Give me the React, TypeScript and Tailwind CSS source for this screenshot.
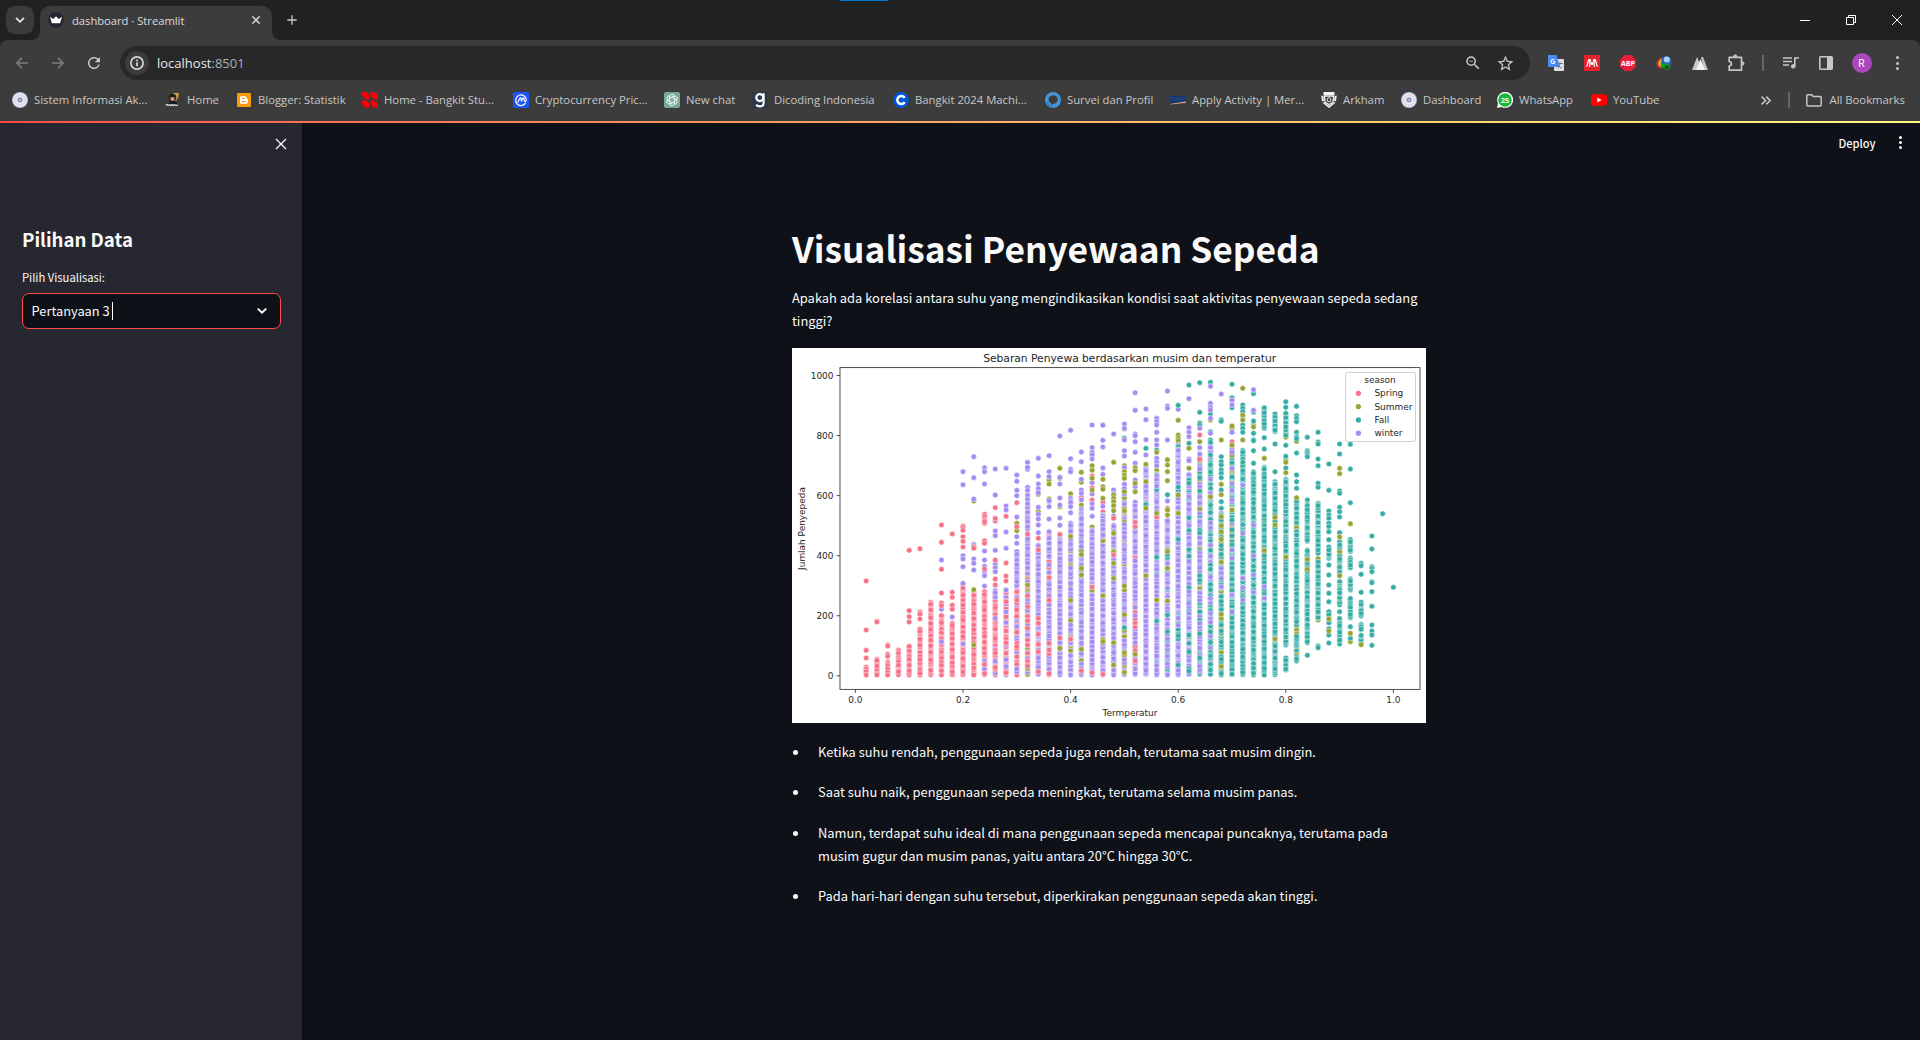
import React from 'react';
import { MdAdd, MdRefresh, MdStarBorder, MdZoomOut } from 'react-icons/md';

const CHROME = "font-['Open_Sans','Noto_Sans',sans-serif]";
const SOURCE = "font-['Noto_Sans_CJK_SC','Noto_Sans',sans-serif]";

/* ---------- Scatter data ---------- */

const COLORS: Record<string, string> = {
  P: '#f77189',
  S: '#97a431',
  F: '#36ada4',
  W: '#a48cf4',
};

// One entry per temperature step of 0.02. Each part is "<season mix> <positions>",
// where a position is a single height or a from-to range that is densely filled.
const COLUMNS: Record<number, string> = {
  1: 'P 708,855,916,939,967,972,980,990',
  2: 'P 829,831,943-990',
  3: 'P 900,903,928,934,951,956,962,972,982,990',
  4: 'P 915,920,926,937,944,950,960-990',
  5: 'P 616,797,815,831,904-990',
  6: 'P 611,800,803,808,822,850-990',
  7: 'W 784|P 771-990',
  8: 'W 645,793|P 540,592,673,744,774,782,810-990|W 890',
  9: 'W 816|P 567,742,757,781,793,835-990',
  10: 'P 543,547,556,575,589,606,720-990|W 380,419,632,642,665,715,897',
  11: 'S 468,598|W 335,398,462,600,642,655,675,765,880|P 605,610,740-990|S 734,900',
  12: 'P 508,535,515,525,530,587,595|PPPPPPW 740-990|W 368,380,417,618,645,664,680,692,723|P 672',
  13: 'W 450,558,572,616,650,658,668,680|W 372|P 488,528,520,645,702,720|PPPPW 735-990|W 743,820',
  14: 'W 370,483,495,561,610|P 514,654,693,708,760|WPP 735-990|P 770,893,925,983|W 735,801',
  15: 'S 535,557|P 473,545|W 516,390,409,436,452,575,595,618-740|WPP 740-990|P 740,765,895,905,935',
  16: 'S 458,685,725|P 552|W 352,373,367,427,436,450,464,475-553,570-690|WWPS 700-990|P 567,752,785,827,850,885,948,963|S 720',
  17: 'S 448,500|W 340,393,417,431,443,487,508,522,540,563,600-990|P 580,615,820,835,868,898,920,980',
  18: 'S 405,417,462|W 332,380,395,470,485,522,467|WWWWP 560-990|P 895,915,986',
  19: 'S 400,485,645,705|W 273,397,417,459,480,519,541,575-990|S 370,910|P 568,879',
  20: 'S 446|W 256,341,373,380,460,467,473,485,503|WWWWWWWWS 535-990|P 883',
  21: 'P 457|S 412,480,555|W 321,350,403,435,445,465,493|WWWWWWWWWS 500-990|S 382,670,690,913|P 977',
  22: 'P 393,428,465|W 240,308,322,330,342,413,447,476,490,514|S 362,376,400,435,546|W 555-990|S 730,736|P 726,983',
  23: 'P 472,500,548|F 510|W 239,241,286,306,369,388,484,518|WWWWWWWWS 512-990|S 403,425,433,460,890|P 988',
  24: 'F 950|W 267,435,445,513,549,540-990|S 352,450,460,470,482,497,565,618,622,655,700,893,960|P 520,630',
  25: 'S 252,362,650|F 280,465|W 237,250,285,317,333,368,418|WWWWS 430-990|S 380,390,400,440,498|F 848',
  26: 'W 143,196,267,272,290,322,355,405,425|WWWWWWP 470-990|S 368,377,415,440,928|W 482,496',
  27: 'W 192,224,284,330,370-990|F 310,478|S 358,410,490,692',
  28: 'S 376|F 315,400|W 220,230,240,262,285,300,340,352,362|S 322,388|WWWWWWF 390-990|P 516|S 505,765',
  29: 'W 138,183,190,285,468|P 490|WWWWWWF 525-990|S 344,360,380,407,495,510,615,620,670,768|F 449,810,860',
  30: 'W 193|F 181|S 226,270,280,288|WWWWWWWF 300-990|S 450,505|F 960',
  31: 'F 120,295|W 161,248,262,275,342,347,388,430|S 310,370|WWWF 390-990|F 405,415,870,895,920|W 700,740',
  32: 'F 113,202,234,240|S 352|WWWFS 330-850|WF 800-990|W 250,308,327,365,372|P 270,343|S 290',
  33: 'F 112,207,260|S 225|FFW 285-990|W 124,175,187,195,220,265|S 455|W 600,760,805,832',
  34: 'F 224,229,335,350,360,375,385,398,435,470,490|W 147,505|S 449|FFFFS 510-990|FW 680-730|W 670,700,725|S 285,418,515,560,583',
  35: 'F 118,158,188|S 250|P 290|FFFWS 300-700|FFFF 600-990|W 166,180,262,322,615,640,750,800|S 243,495',
  36: 'F 180,190,200,215,240,250,262|FFFFS 315-990|F 315-990|S 130,210,225,285|W 420,565,700,728,765',
  37: 'S 240,246|F 146,202,228,265,284,287,317,355,380-990|W 134,196,540,632,690,742',
  38: 'F 188-250,278,312,365-990|S 340,617|W 725,760',
  39: 'F 207-260,297,380,410-990|S 517,540,882',
  40: 'S 277,345|F 170,187,205-272,301,334,369,403-900,937-975|S 352,383,636',
  41: 'S 289|F 184,212,220,230,262,275,281,324,390,410,430|FFFFFFFFS 465-948|S 458',
  42: 'F 277,317,322,328,335,465,478-590|FFFFFFFS 615-895|F 931',
  43: 'F 262,291,297,342,362,415,427,475-625|FFFFFS 640-825|F 650-820,903,908',
  44: 'F 357,436,498,510,520,535,545,560,584,605-640,660,690,720,745,770,800-835,851,870,894|S 822,858',
  45: 'F 297,327,438,445,487,500,516,563,590-690,710-780,800,820-897|S 370,386,576,620,692',
  46: 'S 890|F 298,372,473,582-620,638-668,700-735,760-818,845,880|S 536,865',
  47: 'F 655,662,688,742,772,780,790-815,838-855,870-895|S 899',
  48: 'F 573,612,665,670,680,710,713,740,784,840,858,870,901',
  49: 'F 506',
  50: 'F 727',
};

type Dot = { x: number; y: number; c: string };

function buildDots(): Dot[] {
  let seed = 20240;
  const rnd = () => {
    seed = (seed * 1664525 + 1013904223) % 4294967296;
    return seed / 4294967296;
  };
  const dots: Dot[] = [];
  Object.entries(COLUMNS).forEach(([k, spec]) => {
    const x = 63.4 + 10.76 * Number(k);
    spec.split('|').forEach((part) => {
      const [mix, list] = part.split(' ');
      list.split(',').forEach((item) => {
        const [a, b] = item.split('-').map(Number);
        if (b === undefined) {
          dots.push({ x, y: a / 3 - 3, c: COLORS[mix[0]] });
          return;
        }
        const n = Math.max(3, Math.round((b - a) / 4.2));
        const fill: Dot[] = [];
        for (let i = 0; i <= n; i++) {
          const u = Math.min(b, Math.max(a, a + ((b - a) * i) / n + (rnd() - 0.5) * 4));
          fill.push({ x, y: u / 3 - 3, c: COLORS[mix[Math.floor(rnd() * mix.length)]] });
        }
        for (let i = fill.length - 1; i > 0; i--) {
          const j = Math.floor(rnd() * (i + 1));
          [fill[i], fill[j]] = [fill[j], fill[i]];
        }
        dots.push(...fill);
      });
    });
  });
  return dots;
}

const DOTS = buildDots();

function Scatter() {
  return (
    <svg
      viewBox="0 0 634 375"
      className="block h-[375px] w-[634px] bg-white font-['DejaVu_Sans',sans-serif]"
      fill="#262626"
    >
      <text x="337.7" y="14.3" fontSize="10.75" textAnchor="middle" textLength="293">
        Sebaran Penyewa berdasarkan musim dan temperatur
      </text>
      {DOTS.map((d, i) => (
        <circle key={i} cx={d.x} cy={d.y} r="2.75" fill={d.c} stroke="#fff" strokeWidth="0.5" />
      ))}
      <rect x="48" y="19.6" width="580" height="321.8" fill="none" stroke="#3c3c3c" strokeWidth="0.9" />
      {[0, 200, 400, 600, 800, 1000].map((v) => (
        <g key={v}>
          <path d={`M44.6 ${327.8 - v * 0.3003}H48`} stroke="#3c3c3c" strokeWidth="0.9" />
          <text x="41.5" y={331.1 - v * 0.3003} fontSize="8.95" textAnchor="end">
            {v}
          </text>
        </g>
      ))}
      {['0.0', '0.2', '0.4', '0.6', '0.8', '1.0'].map((v, i) => (
        <g key={v}>
          <path d={`M${63.4 + i * 107.6} 341.4v3.4`} stroke="#3c3c3c" strokeWidth="0.9" />
          <text x={63.4 + i * 107.6} y="355.4" fontSize="8.95" textAnchor="middle">
            {v}
          </text>
        </g>
      ))}
      <text x="338" y="367.5" fontSize="8.95" textAnchor="middle">
        Termperatur
      </text>
      <text transform="translate(13 180.500) rotate(-90)" fontSize="8.95" textAnchor="middle">
        Jumlah Penyepeda
      </text>
      <rect x="553.5" y="24.5" width="70" height="69" rx="1.8" fill="#fff" fillOpacity="0.8" stroke="#ccc" strokeWidth="0.9" />
      <text x="588" y="35.1" fontSize="8.95" textAnchor="middle">
        season
      </text>
      {(
        [
          ['Spring', 'P'],
          ['Summer', 'S'],
          ['Fall', 'F'],
          ['winter', 'W'],
        ] as const
      ).map(([name, key], i) => (
        <g key={name}>
          <circle cx="566.4" cy={45.3 + i * 13.3} r="2.6" fill={COLORS[key]} />
          <text x="582.4" y={48.4 + i * 13.3} fontSize="8.95">
            {name}
          </text>
        </g>
      ))}
    </svg>
  );
}

/* ---------- Favicons ---------- */

function Ico({ children }: { children: React.ReactNode }) {
  return (
    <svg viewBox="0 0 16 16" className="block size-4 shrink-0" fill="none">
      {children}
    </svg>
  );
}

const Campus = () => (
  <Ico>
    <circle cx="8" cy="8" r="8" fill="#a9c3ea" />
    <circle cx="8" cy="8" r="6.9" fill="#e9edf7" />
    <circle cx="8" cy="8" r="5" stroke="#efc2bb" strokeWidth="1.6" strokeDasharray="1.3 1.1" />
    <circle cx="8" cy="8" r="3.1" fill="#cdd6ee" />
    <circle cx="8" cy="7.8" r="1.9" stroke="#5a6fb8" strokeWidth="0.9" />
    <path d="M7 7.600l2-.6-.4 2z" fill="#e79a5e" />
  </Ico>
);
const Avatar = () => (
  <Ico>
    <path d="M8 1h6l-1 5-2 3H7z" fill="#c9a24a" />
    <circle cx="7.5" cy="5.5" r="3.8" fill="#241c18" />
    <path d="M5.5 5.2h4v2.6l-2 1.4-2-1.4z" fill="#d9a184" />
    <path d="M4 10l3.5-1 4 1 .8 3H3z" fill="#171717" />
    <path d="M.5 13.200l1.800-.8.8 1 1.600-.9.9 1 1.700-.9.9.9 1.700-.8 1 .8 2-.6" stroke="#ddd" strokeWidth="1.200" />
  </Ico>
);
const Blogger = () => (
  <Ico>
    <rect x="1" y="1" width="14" height="14" rx="1" fill="#fb9a0b" />
    <path
      d="M6 4h2.4c1.4 0 2.3.9 2.3 2.2 0 .6.2.8.7.8.4 0 .6.2.6.6v1.7C12 11 10.9 12 9.4 12H6c-1.3 0-2-.8-2-2V6c0-1.2.8-2 2-2z"
      fill="#fff"
    />
    <path d="M6.3 6.4h1.9M6.3 9.6h3.3" stroke="#fb9a0b" strokeWidth="1.2" strokeLinecap="round" />
  </Ico>
);
const Bangkit = () => (
  <Ico>
    <g fill="#fb0007">
      <path d="M0 0h2.500C5.500 0 7.500 2.500 7.500 5v2.500H6C2.500 7.500 0 4.500 0 2z" />
      <path d="M8.500 0H11c3 0 5 2.500 5 5v2.500h-1.500c-3.500 0-6-3-6-5.500z" />
      <path d="M0 8.500h2.500c3 0 5 2.500 5 5V16H6c-3.500 0-6-3-6-5.500z" />
      <path d="M8.500 8.500H11c3 0 5 2.500 5 5V16h-1.500c-3.500 0-6-3-6-5.500z" />
    </g>
  </Ico>
);
const CoinMarket = () => (
  <Ico>
    <rect width="16" height="16" rx="2" fill="#1c53fb" />
    <path
      d="M12.4 11.2A5.3 5.3 0 1 1 13.3 8c0 1.9-2.2 2-2.2.4V6.8c0-1.2-1.1-1.2-1.5-.3L8.2 9.3V6.7c0-1-1-1.1-1.5-.2L5 9.900"
      stroke="#fff"
      strokeWidth="1.2"
      strokeLinecap="round"
    />
  </Ico>
);
const ChatGpt = () => (
  <Ico>
    <rect width="16" height="16" rx="2" fill="#75a99b" />
    <g stroke="#fff" strokeWidth="0.85">
      {[0, 60, 120, 180, 240, 300].map((a) => (
        <path key={a} transform={`rotate(${a} 8 8)`} d="M5.8 8.2V4.8a2.5 2.5 0 0 1 4.5-1.4M7 5.6l3.3-2" />
      ))}
    </g>
  </Ico>
);
const Dicoding = () => (
  <Ico>
    <rect width="15.5" height="16" fill="#2b3a4b" />
    <circle cx="7.800" cy="5.600" r="3.500" stroke="#fff" strokeWidth="2.200" />
    <path d="M11.600 1.200v9.500c0 2.600-1.500 3.700-3.700 3.700-1.700 0-2.900-.6-3.800-1.600" stroke="#fff" strokeWidth="2.100" />
  </Ico>
);
const Coursera = () => (
  <Ico>
    <circle cx="8" cy="8" r="8" fill="#0056d2" />
    <path d="M11.7 10.1A4 4 0 1 1 11.7 5.900" stroke="#fff" strokeWidth="2.5" />
  </Ico>
);
const Survey = () => (
  <Ico>
    <circle cx="8" cy="8" r="8" fill="#4795d6" />
    <path
      d="M3.5 7.5c0-2.5 2-4.2 4.7-4.2s4.6 1.700 4.600 4.200-2 4.200-4.400 4.200l-2.200 1.500.2-1.900c-1.800-.6-2.900-2-2.900-3.800z"
      fill="#3c3c3c"
    />
    <path d="M1.5 10.5C3 14 6 15.7 9.5 15.2 6.5 15 4 13.5 3 11z" fill="#1f62a6" />
  </Ico>
);
const Mercu = () => (
  <Ico>
    <path d="M0 4h16v6.5L0 11z" fill="#17376f" />
    <path d="M1 5.8h3M5.5 5.8h2M9 5.8h2.5M13 5.8h2M1 7.8h2M4.5 7.8h3M9 7.8h4" stroke="#2c5590" strokeWidth="0.8" />
    <path d="M0 12l16-2.5v1.2L0 12.6z" fill="#f2b48c" />
  </Ico>
);
const ArkhamIcon = () => (
  <Ico>
    <path d="M2.5 0h11v3h-11zM.3 3.6l1.9.4.8 4.6L1 9.5zM15.7 3.6l-1.9.4-.8 4.6 2 .9z" fill="#f5f5f5" />
    <path d="M3.3 4h9.4l-.8 6.2L8 12.5l-3.900-2.300z" stroke="#f5f5f5" strokeWidth="1.3" />
    <path d="M1.5 10.8L8 16l6.5-5.2-1.5-.6L8 13.8l-5-3.6z" fill="#f5f5f5" />
    <path d="M8 5.5l2 1.5-.7 2.5H6.7L6 7z" stroke="#f5f5f5" strokeWidth="0.9" />
  </Ico>
);
const WhatsApp = () => (
  <Ico>
    <path d="M0 16l1-4.5A8 8 0 1 1 4.5 15z" fill="#fff" />
    <circle cx="8" cy="8" r="6.8" fill="#16b842" />
    <text x="8" y="10.7" fontSize="7.5" fontWeight="700" textAnchor="middle" fill="#fff">
      25
    </text>
  </Ico>
);
const YouTube = () => (
  <Ico>
    <rect x="0" y="2.3" width="16" height="11.4" rx="2.8" fill="#f00" />
    <path d="M6.3 5.6v4.8L10.6 8z" fill="#fff" />
  </Ico>
);

const BOOKMARKS: [React.FC, string, string][] = [
  [Campus, 'Sistem Informasi Ak...', 'w-[153px]'],
  [Avatar, 'Home', 'w-[71px]'],
  [Blogger, 'Blogger: Statistik', 'w-[126px]'],
  [Bangkit, 'Home - Bangkit Stu...', 'w-[151px]'],
  [CoinMarket, 'Cryptocurrency Pric...', 'w-[151px]'],
  [ChatGpt, 'New chat', 'w-[88px]'],
  [Dicoding, 'Dicoding Indonesia', 'w-[141px]'],
  [Coursera, 'Bangkit 2024 Machi...', 'w-[152px]'],
  [Survey, 'Survei dan Profil', 'w-[125px]'],
  [Mercu, 'Apply Activity | Mer...', 'w-[151px]'],
  [ArkhamIcon, 'Arkham', 'w-[80px]'],
  [Campus, 'Dashboard', 'w-[96px]'],
  [WhatsApp, 'WhatsApp', 'w-[94px]'],
  [YouTube, 'YouTube', 'w-[90px]'],
];

/* ---------- Browser frame ---------- */

function TabStrip() {
  return (
    <div className="relative flex h-10 items-end bg-[#202221]">
      <div className="absolute left-[840px] top-0 h-px w-12 bg-[#0078d7]" />
      <div className="mb-[6px] ml-[6px] flex size-7 items-center justify-center rounded-[9px] bg-[#3b3b3b] text-[#e3e3e3]">
        <svg viewBox="0 0 10 6" className="h-[6px] w-[10px]" fill="none" stroke="currentColor" strokeWidth="1.8">
          <path d="M1 .8l4 4 4-4" />
        </svg>
      </div>
      <div className="relative ml-[6px] flex h-[34px] w-[232px] items-center rounded-t-[10px] bg-[#3c3c3c] pb-[6px] pl-2 text-[#dedede]">
        <div className="absolute -left-2 bottom-0 size-2 bg-[radial-gradient(circle_at_0_0,#202221_7.5px,#3c3c3c_8px)]" />
        <div className="absolute -right-2 bottom-0 size-2 bg-[radial-gradient(circle_at_100%_0,#202221_7.5px,#3c3c3c_8px)]" />
        <Ico>
          <circle cx="8" cy="8" r="8" fill="#262730" />
          <path d="M2 5l3.4 2L8 4.2 10.6 7 14 5l-1.900 6.300H3.900z" fill="#fff" />
        </Ico>
        <span className="ml-2 mt-px whitespace-nowrap text-[11.2px] leading-4">dashboard · Streamlit</span>
        <svg viewBox="0 0 8 8" className="ml-auto mr-3 size-2" fill="none" stroke="#dedede" strokeWidth="1.4">
          <path d="M.4.4l7.2 7.2M7.6.4L.4 7.6" />
        </svg>
      </div>
      <MdAdd className="mb-[12px] ml-[12px] size-4 text-[#c7c7c7]" />
      <div className="mb-[15px] ml-auto mr-[18px] flex items-center gap-9 text-white">
        <svg viewBox="0 0 10 10" className="size-[10px]" stroke="currentColor" fill="none">
          <path d="M0 5.5h10" />
        </svg>
        <svg viewBox="0 0 10 10" className="size-[10px] overflow-visible" stroke="currentColor" fill="none">
          <path d="M.5 2.5h7v7h-7zM2.5 2.5v-2h7v7h-2" />
        </svg>
        <svg viewBox="0 0 10 10" className="size-[10px]" stroke="currentColor" fill="none">
          <path d="M0 0l10 10M10 0L0 10" />
        </svg>
      </div>
    </div>
  );
}

function Extensions() {
  return (
    <div className="ml-[18px] flex items-center gap-5">
      <Ico>
        <rect x="6" y="4" width="10" height="12" rx="0.8" fill="#dcdfe3" />
        <path d="M0 0h8.5l3.5 12H1a1 1 0 0 1-1-1z" fill="#4a8af4" />
        <path d="M9 8.5h6M12 7.3v1.2c-.2 2-1 3.5-2.5 4.8M10.3 10c.8 1.6 2 2.7 3.600 3.300" stroke="#64727c" strokeWidth="0.9" />
        <path d="M7 6.5H5.100M7 6.500A2 2 0 1 1 6.300 5" stroke="#fff" strokeWidth="1.1" />
      </Ico>
      <Ico>
        <rect width="16" height="16" fill="#e5232e" />
        <circle cx="5.500" cy="5.400" r="1.700" fill="#fff" />
        <circle cx="10.500" cy="5.400" r="1.700" fill="#fff" />
        <circle cx="8" cy="8.400" r="1.700" fill="#fff" />
        <path d="M4.400 6.200C3.200 7.500 4 9.700 2.900 11.200M11.600 6.200c1.200 1.300.4 3.500 1.500 5M5.800 7.500c.4 1 .3 2.700-.2 3.700M10.200 7.500c-.4 1-.3 2.700.2 3.700" stroke="#fff" strokeWidth="1.300" strokeLinecap="round" />
      </Ico>
      <Ico>
        <path d="M4.7 0h6.6L16 4.7v6.6L11.3 16H4.7L0 11.3V4.7z" fill="#ec1c3c" />
        <text
          x="8"
          y="10.8"
          fontSize="7.3"
          fontWeight="700"
          textAnchor="middle"
          textLength="14"
          lengthAdjust="spacingAndGlyphs"
          fill="#fff"
        >
          ABP
        </text>
      </Ico>
      <Ico>
        <circle cx="10" cy="6.5" r="5.5" fill="#2a62b4" />
        <circle cx="10.800" cy="4.600" r="3" fill="#a9d4f5" />
        <path d="M6 2.500C2 3.800-.5 7 .8 10.500c.8 2 3 3 5.400 2.800L6 11C3.500 10.500 3 7 6 2.500z" fill="#d83a22" />
        <path d="M6 3.500C3 5.500 2 8 3 10c.7 1.200 2 1.800 4 1.500V9.500C5 9 4.700 6.500 6 3.500z" fill="#f7c81e" />
        <path d="M4.500 6.500c.5 2 2 2.700 4.500 2.500V7.500l6.500 4.200L9.500 16v-2.500C6.500 13.500 4 11.500 4.500 6.500z" fill="#149a2c" />
        <path d="M9 10.500l5.500 1.200-5 2.800z" fill="#0a4a12" />
      </Ico>
      <Ico>
        <path d="M0 15L5 2l3 6.5L5.5 15z" fill="#c9c9c9" />
        <path d="M9 2h2l5 13h-4z" fill="#c4c4c4" />
        <path d="M4 15L8.500 4 13 15z" fill="#f4f4f4" />
      </Ico>
      <svg
        viewBox="0 0 18 18"
        className="-mx-px size-[18px] text-[#c7c7c7]"
        fill="none"
        stroke="currentColor"
        strokeWidth="1.7"
        strokeLinejoin="round"
      >
        <path d="M2.200 3.300h12.300v12.900H2.200v-4.200c1.300-.2 2.200-1 2.200-2.200S3.500 7.700 2.200 7.500z" />
        <path d="M6.600 2.500a1.700 1.700 0 0 1 3.400 0zM15.300 7.700a1.700 1.700 0 0 1 0 3.600z" fill="currentColor" strokeWidth="0.800" />
      </svg>
    </div>
  );
}

function Toolbar() {
  return (
    <div className="flex h-[46px] items-center rounded-t-[8px] bg-[#3c3c3c] text-[#c7c7c7]">
      <svg viewBox="0 0 12 12" className="ml-4 size-3 text-[#7d7d7d]" fill="none" stroke="currentColor" strokeWidth="1.5">
        <path d="M12 6H1M6 .7L.9 6 6 11.3" />
      </svg>
      <svg viewBox="0 0 12 12" className="ml-6 size-3 text-[#7d7d7d]" fill="none" stroke="currentColor" strokeWidth="1.5">
        <path d="M0 6h11M6 .7L11.1 6 6 11.3" />
      </svg>
      <MdRefresh className="ml-[21px] size-[18px]" />
      <div className="ml-[17px] flex h-[34px] w-[1410px] items-center rounded-full bg-[#282828] pl-[5px] pr-[15px]">
        <div className="flex size-6 items-center justify-center rounded-full bg-[#3c3c3c]">
          <svg viewBox="0 0 14 14" className="size-[14px]" fill="none" stroke="#d6d6d6">
            <circle cx="7" cy="7" r="6.1" strokeWidth="1.7" />
            <path d="M7 6.2v4M7 3.600v1.600" strokeWidth="1.7" />
          </svg>
        </div>
        <div className="ml-2 text-[13px] leading-5 text-[#a9b0b6]">
          <span className="text-[#e6e8ea]">localhost</span>:8501
        </div>
        <MdZoomOut className="ml-auto size-[18px]" />
        <MdStarBorder className="ml-[14px] size-[19px]" />
      </div>
      <Extensions />
      <div className="ml-[18px] h-4 w-[1.5px] bg-[#666]" />
      <svg viewBox="0 0 16 14" className="ml-[19px] h-[14px] w-4" fill="none" stroke="currentColor" strokeWidth="1.6">
        <path d="M0 2h9M0 5.5h9M0 9h6" />
        <path d="M11.800 10V2H16" />
        <circle cx="10.200" cy="10.300" r="1.900" fill="currentColor" strokeWidth="0.8" />
      </svg>
      <svg viewBox="0 0 14 14" className="ml-5 size-[14px]" fill="none" stroke="currentColor" strokeWidth="1.6">
        <rect x="0.8" y="0.8" width="12.4" height="12.4" rx="0.8" />
        <path d="M8 1h5v12H8z" fill="currentColor" stroke="none" />
      </svg>
      <div className="ml-[19px] flex size-5 items-center justify-center rounded-full bg-[#ab47bc] pb-px text-[11px] leading-none text-white">
        R
      </div>
      <div className="ml-[24px] flex flex-col gap-[2.5px]">
        <i className="size-[3px] rounded-full bg-[#c7c7c7]" />
        <i className="size-[3px] rounded-full bg-[#c7c7c7]" />
        <i className="size-[3px] rounded-full bg-[#c7c7c7]" />
      </div>
    </div>
  );
}

function BookmarksBar() {
  return (
    <div className="flex h-[35px] items-center bg-[#3c3c3c] pb-[7px] pl-3 text-[11.3px] leading-4 text-[#c7c7c7]">
      {BOOKMARKS.map(([Icon, label, width]) => (
        <div key={label} className={`flex shrink-0 items-center gap-[6px] whitespace-nowrap ${width}`}>
          <Icon />
          <span>{label}</span>
        </div>
      ))}
      <svg viewBox="0 0 10 9" className="ml-[80px] h-[9px] w-[10px]" fill="none" stroke="currentColor" strokeWidth="1.5">
        <path d="M.6.6l4 3.9-4 3.9M5.2.6l4 3.900-4 3.900" />
      </svg>
      <div className="ml-[17px] h-4 w-[1.5px] bg-[#666]" />
      <svg viewBox="0 0 16 13" className="ml-[16px] h-[13px] w-4" fill="none" stroke="currentColor" strokeWidth="1.5">
        <path d="M.8 1.8a1 1 0 0 1 1-1h3.9l1.5 1.6h7a1 1 0 0 1 1 1v7.700a1 1 0 0 1-1 1H1.800a1 1 0 0 1-1-1z" />
      </svg>
      <span className="ml-2 whitespace-nowrap">All Bookmarks</span>
    </div>
  );
}

/* ---------- Streamlit page ---------- */

function Sidebar() {
  return (
    <aside className="flex w-[302px] shrink-0 flex-col bg-[#262730] px-[22px] text-[#fafafa]">
      <svg
        viewBox="0 0 10 10"
        className="-mr-[6px] mt-[16px] size-[10px] self-end overflow-visible"
        fill="none"
        stroke="#fafafa"
        strokeWidth="1.3"
      >
        <path d="M0 0l10 10M10 0L0 10" />
      </svg>
      <h2 className="mt-[77px] text-[18.6px] font-bold leading-[26px]">Pilihan Data</h2>
      <label className="mt-[16px] text-[11.22px] leading-[18px]">Pilih Visualisasi:</label>
      <div className="mt-[7px] flex h-9 w-[259px] items-center rounded-[7px] border border-[#ff4b4b] bg-[#0e1117] pl-[8.5px] pr-[13px] text-[12.85px]">
        <span className="leading-5">Pertanyaan 3</span>
        <i className="ml-[2px] h-[18px] w-px bg-white" />
        <svg
          viewBox="0 0 10 6"
          className="ml-auto h-[6px] w-[10px] overflow-visible"
          fill="none"
          stroke="#fafafa"
          strokeWidth="2"
        >
          <path d="M.8.6L5 4.6 9.2.6" />
        </svg>
      </div>
    </aside>
  );
}

const POINTS = [
  'Ketika suhu rendah, penggunaan sepeda juga rendah, terutama saat musim dingin.',
  'Saat suhu naik, penggunaan sepeda meningkat, terutama selama musim panas.',
  'Namun, terdapat suhu ideal di mana penggunaan sepeda mencapai puncaknya, terutama pada musim gugur dan musim panas, yaitu antara 20°C hingga 30°C.',
  'Pada hari-hari dengan suhu tersebut, diperkirakan penggunaan sepeda akan tinggi.',
];

function Main() {
  return (
    <main className="flex grow flex-col bg-[#0e1117] text-[#fafafa]">
      <header className="flex h-[38px] items-center justify-end pr-[18.5px] pt-px">
        <span className="text-[11.05px] font-medium leading-4">Deploy</span>
        <div className="ml-[23px] flex flex-col gap-[2px]">
          <i className="size-[3px] rounded-full bg-[#fafafa]" />
          <i className="size-[3px] rounded-full bg-[#fafafa]" />
          <i className="size-[3px] rounded-full bg-[#fafafa]" />
        </div>
      </header>
      <div className="ml-[490px] mt-[63px] w-[634px]">
        <h1 className="whitespace-nowrap text-[35.3px] font-bold leading-[48px]">Visualisasi Penyewaan Sepeda</h1>
        <p className="mt-[14px] text-[12.9px] leading-[23px]">
          Apakah ada korelasi antara suhu yang mengindikasikan kondisi saat aktivitas penyewaan sepeda sedang tinggi?
        </p>
        <div className="mt-[16px]">
          <Scatter />
        </div>
        <ul className="mt-[17px] flex flex-col gap-[17.3px] text-[12.9px] leading-[23px]">
          {POINTS.map((t) => (
            <li key={t} className="flex">
              <i className="ml-px mt-[10px] size-[5px] shrink-0 rounded-full bg-[#fafafa]" />
              <span className="ml-5 w-[590px]">{t}</span>
            </li>
          ))}
        </ul>
      </div>
    </main>
  );
}

export default function App() {
  return (
    <div className={`flex h-[1040px] w-[1920px] flex-col overflow-hidden bg-[#202221] ${CHROME}`}>
      <TabStrip />
      <Toolbar />
      <BookmarksBar />
      <div className="h-[2px] bg-linear-to-r from-[#ff4b4b] to-[#fffd80]" />
      <div className={`flex grow ${SOURCE}`}>
        <Sidebar />
        <Main />
      </div>
    </div>
  );
}
